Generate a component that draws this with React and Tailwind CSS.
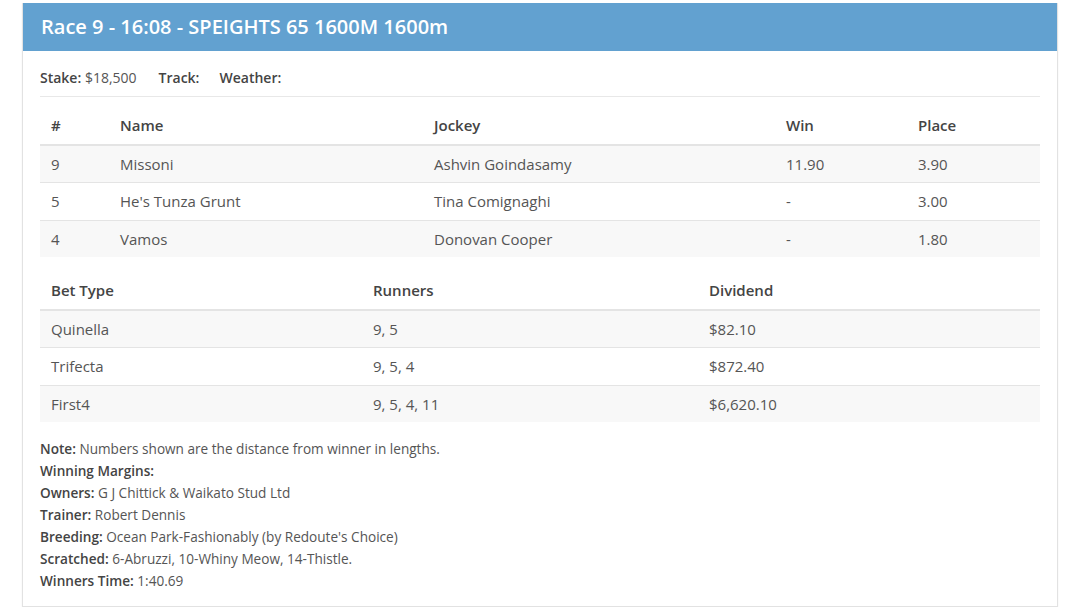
import React from 'react';

const runners = [
  { no: '9', name: 'Missoni', jockey: 'Ashvin Goindasamy', win: '11.90', place: '3.90' },
  { no: '5', name: "He's Tunza Grunt", jockey: 'Tina Comignaghi', win: '-', place: '3.00' },
  { no: '4', name: 'Vamos', jockey: 'Donovan Cooper', win: '-', place: '1.80' },
];

const bets = [
  { type: 'Quinella', runners: '9, 5', dividend: '$82.10' },
  { type: 'Trifecta', runners: '9, 5, 4', dividend: '$872.40' },
  { type: 'First4', runners: '9, 5, 4, 11', dividend: '$6,620.10' },
];

const notes = [
  ['Note:', 'Numbers shown are the distance from winner in lengths.'],
  ['Winning Margins:', ''],
  ['Owners:', 'G J Chittick & Waikato Stud Ltd'],
  ['Trainer:', 'Robert Dennis'],
  ['Breeding:', "Ocean Park-Fashionably (by Redoute's Choice)"],
  ['Scratched:', '6-Abruzzi, 10-Whiny Meow, 14-Thistle.'],
  ['Winners Time:', '1:40.69'],
];

const th = 'px-[11px] py-2 text-left font-semibold text-[#444] border-b-2 border-[#e4e4e4]';
const td = 'px-[11px] py-2 border-t border-[#e4e4e4]';

export default function App() {
  return (
    <div className="min-h-screen bg-white pt-[3px] font-['Open_Sans',sans-serif]">
      <div className="ml-[22px] w-[1036px] border border-[#e2e2e2] border-t-0 shadow-[0_1px_2px_rgba(0,0,0,0.05)]">
        <div className="h-[48px] bg-[#62a1d0] px-[18px] flex items-center">
          <h2 className="text-[20px] font-semibold text-white">
            Race 9 - 16:08 - SPEIGHTS 65 1600M 1600m
          </h2>
        </div>

        <div className="px-[17px] pb-[14px]">
          <div className="pt-[17px] pb-[8px] leading-[20px] text-[14px] text-[#555] border-b border-[#e8e8e8]">
            <span className="font-semibold text-[#444]">Stake:</span> $18,500
            <span className="ml-[22px] font-semibold text-[#444]">Track:</span>
            <span className="ml-[20px] font-semibold text-[#444]">Weather:</span>
          </div>

          <table className="mt-[10px] w-full border-separate border-spacing-0 text-[15px] leading-[20.5px] text-[#555]">
            <thead>
              <tr>
                <th className={`${th} w-[69px]`}>#</th>
                <th className={`${th} w-[314px]`}>Name</th>
                <th className={`${th} w-[352px]`}>Jockey</th>
                <th className={`${th} w-[132px]`}>Win</th>
                <th className={th}>Place</th>
              </tr>
            </thead>
            <tbody>
              {runners.map((r, i) => (
                <tr key={r.no} className={i % 2 === 0 ? 'bg-[#f8f8f8]' : 'bg-white'}>
                  <td className={`${td} ${i === 0 ? 'border-t-0' : ''}`}>{r.no}</td>
                  <td className={`${td} ${i === 0 ? 'border-t-0' : ''}`}>{r.name}</td>
                  <td className={`${td} ${i === 0 ? 'border-t-0' : ''}`}>{r.jockey}</td>
                  <td className={`${td} ${i === 0 ? 'border-t-0' : ''}`}>{r.win}</td>
                  <td className={`${td} ${i === 0 ? 'border-t-0' : ''}`}>{r.place}</td>
                </tr>
              ))}
            </tbody>
          </table>

          <table className="mt-[15px] w-full border-separate border-spacing-0 text-[15px] leading-[20.5px] text-[#555]">
            <thead>
              <tr>
                <th className={`${th} w-[322px]`}>Bet Type</th>
                <th className={`${th} w-[336px]`}>Runners</th>
                <th className={th}>Dividend</th>
              </tr>
            </thead>
            <tbody>
              {bets.map((b, i) => (
                <tr key={b.type} className={i % 2 === 0 ? 'bg-[#f8f8f8]' : 'bg-white'}>
                  <td className={`${td} ${i === 0 ? 'border-t-0' : ''}`}>{b.type}</td>
                  <td className={`${td} ${i === 0 ? 'border-t-0' : ''}`}>{b.runners}</td>
                  <td className={`${td} ${i === 0 ? 'border-t-0' : ''}`}>{b.dividend}</td>
                </tr>
              ))}
            </tbody>
          </table>

          <div className="mt-[16px] text-[13.6px] leading-[22px] text-[#555]">
            {notes.map(([label, value]) => (
              <div key={label}>
                <span className="font-semibold text-[#444]">{label}</span>
                {value && ` ${value}`}
              </div>
            ))}
          </div>
        </div>
      </div>
    </div>
  );
}
